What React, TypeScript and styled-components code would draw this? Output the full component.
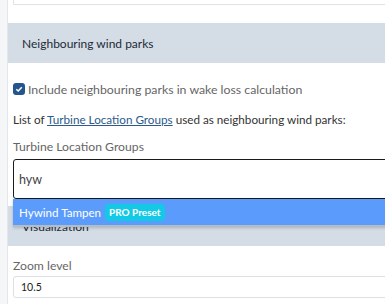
import React from 'react';
import styled, { createGlobalStyle } from 'styled-components';

const GlobalStyle = createGlobalStyle`
  body {
    margin: 0;
    font-family: Lato, 'Noto Sans', sans-serif;
    background: #fff;
    overflow: hidden;
  }
`

export default function App() {
  return (
    <Page>
      <GlobalStyle />
      <Sidebar />
      <Main>
        <PrevInput />

        <SectionHeader>Neighbouring wind parks</SectionHeader>
        <Body>
          <CheckRow>
            <Check>
              <svg width="8" height="8" viewBox="0 0 8 8">
                <path d="M1.3 4.2 L3.2 6 L6.8 2.2" stroke="#fff" strokeWidth="1.5" fill="none" />
              </svg>
            </Check>
            Include neighbouring parks in wake loss calculation
          </CheckRow>
          <Hint>
            List of <Link>Turbine Location Groups</Link> used as neighbouring wind parks:
          </Hint>
          <Label>Turbine Location Groups</Label>
          <SelectWrap>
            <SelectBox>hyw</SelectBox>
            <Menu>
              <Option>
                Hywind Tampen <Badge>PRO Preset</Badge>
              </Option>
            </Menu>
          </SelectWrap>
        </Body>

        <SectionHeader $top={7}>Visualization</SectionHeader>
        <Body>
          <Label $top={12}>Zoom level</Label>
          <TextInput>10.5</TextInput>
        </Body>
      </Main>
    </Page>
  );
}

const Page = styled.div`
  display: flex;
  width: 385px;
  height: 304px;
  overflow: hidden;
`

const Sidebar = styled.div`
  width: 7px;
  flex-shrink: 0;
  background: #f5f6f8;
  border-right: 1px solid #e4e6ea;
`

const Main = styled.div`
  width: 430px;
  flex-shrink: 0;
`

const PrevInput = styled.div`
  margin-left: 5px;
  height: 4px;
  border: 1px solid #dfe3e7;
  border-top: none;
`

const SectionHeader = styled.div<{ $top?: number }>`
  margin-top: ${p => p.$top ?? 18}px;
  height: 40px;
  display: flex;
  align-items: center;
  padding-left: 14px;
  background: #d4dde6;
  color: #1e2a38;
  font-size: 12px;
`

const Body = styled.div`
  padding-left: 5px;
  display: flex;
  flex-direction: column;
`

const CheckRow = styled.label`
  margin-top: 19px;
  display: flex;
  align-items: center;
  gap: 3px;
  font-size: 12.3px;
  color: #666;
  height: 14px;
`

const Check = styled.span`
  width: 12px;
  height: 12px;
  border-radius: 3px;
  background: #24568d;
  display: flex;
  align-items: center;
  justify-content: center;
`

const Hint = styled.div`
  margin-top: 15px;
  font-size: 11.7px;
  color: #333;
  line-height: 16px;
`

const Link = styled.a`
  color: #2b5a8b;
  text-decoration: underline;
`

const Label = styled.div<{ $top?: number }>`
  margin-top: ${p => p.$top ?? 12}px;
  font-size: 12.2px;
  color: #666;
  line-height: 16px;
`

const SelectWrap = styled.div`
  position: relative;
  margin-top: 4px;
`

const SelectBox = styled.div`
  height: 38px;
  border: 1px solid #1a1a1a;
  border-radius: 3px;
  display: flex;
  align-items: center;
  padding-left: 5px;
  font-size: 12.5px;
  color: #444;
`

const Menu = styled.div`
  position: absolute;
  top: 100%;
  left: 0;
  right: 0;
  z-index: 2;
  background: #fff;
  border-bottom: 2px solid #b4bcc6;
  box-shadow: 0 1px 3px rgba(0, 0, 0, 0.2);
`

const Option = styled.div`
  height: 26px;
  display: flex;
  align-items: center;
  gap: 4px;
  padding-left: 6px;
  background: #5a9bfb;
  color: #fff;
  font-size: 11.6px;
`

const Badge = styled.span`
  background: #14c9e6;
  color: #fff;
  font-weight: 700;
  font-size: 10px;
  line-height: 11px;
  border-radius: 4px;
  padding: 3px 4px;
`

const TextInput = styled.div`
  margin-top: 2px;
  height: 20px;
  border: 1px solid #dcdfe3;
  border-radius: 3px;
  display: flex;
  align-items: center;
  padding-left: 7px;
  font-size: 10.5px;
  color: #222;
`
